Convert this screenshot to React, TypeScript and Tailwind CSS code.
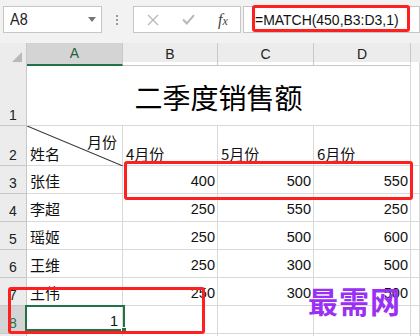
import React from 'react';

const rows = [
  { n: 3, name: '张佳', v: [400, 500, 550] },
  { n: 4, name: '李超', v: [250, 550, 250] },
  { n: 5, name: '瑶姬', v: [250, 500, 600] },
  { n: 6, name: '王维', v: [250, 300, 500] },
  { n: 7, name: '王伟', v: [250, 300, 500] },
];

const cjk = "font-['Noto_Sans_CJK_SC',sans-serif]";
const num = "font-['Liberation_Sans',Arial,sans-serif]";

function RowHead({ n, sel }: { n?: number; sel?: boolean }) {
  return (
    <div
      className={`${num} flex items-end justify-center pb-[3px] text-[14px] leading-none border-r border-b border-[#c8c8c8] ${
        sel ? 'bg-[#d4d4d4] text-[#217346]' : 'bg-[#ececec] text-[#222]'
      }`}
    >
      {n}
    </div>
  );
}

function Cell({ children, right, cls = '' }: { children?: React.ReactNode; right?: boolean; cls?: string }) {
  return (
    <div
      className={`flex items-end border-r border-b border-[#d9d9d9] bg-white text-[#111] ${
        right ? 'justify-end pr-[2px]' : 'justify-start pl-[3px]'
      } ${cls}`}
    >
      {children}
    </div>
  );
}

export default function App() {
  return (
    <div className="relative w-[420px] h-[336px] overflow-hidden bg-white">
      {/* Formula bar */}
      <div className="h-[43px] bg-[#f2f2f2] flex items-start pt-[6px] pl-[3px]">
        <div className="w-[101px] h-[27px] bg-white border border-[#c6c6c6] flex items-center justify-between pl-[6px] pr-[5px]">
          <span className={`${num} inline-block origin-left scale-x-[0.85] text-[17px] leading-none text-[#222]`}>A8</span>
          <svg width="8" height="5" viewBox="0 0 8 5">
            <polygon points="0,0 8,0 4,5" fill="#777" />
          </svg>
        </div>
        <div className="w-[31px] h-[27px] flex flex-col items-center justify-center gap-[2px]">
          <div className="w-[2px] h-[2px] bg-[#9a9a9a]" />
          <div className="w-[2px] h-[2px] bg-[#9a9a9a]" />
          <div className="w-[2px] h-[2px] bg-[#9a9a9a]" />
        </div>
        <div className="w-[111px] h-[27px] bg-white border border-[#c6c6c6] flex items-center">
          <div className="w-[38px] flex justify-center">
            <svg width="12" height="12" viewBox="0 0 12 12">
              <path d="M1 1 L11 11 M11 1 L1 11" stroke="#b8b8b8" strokeWidth="1.3" fill="none" />
            </svg>
          </div>
          <div className="w-[34px] flex justify-center">
            <svg width="13" height="11" viewBox="0 0 13 11">
              <path d="M1 5.5 L4.8 9.5 L12 1.2" stroke="#b8b8b8" strokeWidth="2" fill="none" />
            </svg>
          </div>
          <div className="flex-1 flex justify-center items-baseline font-['Liberation_Serif',serif] italic text-[#444]">
            <span className="text-[16px] leading-none">f</span>
            <span className="text-[12px] leading-none">x</span>
          </div>
        </div>
        <div className="ml-[2px] w-[180px] h-[27px] bg-white border border-[#c6c6c6] flex items-center pl-[11px]">
          <span className={`${num} inline-block origin-left scale-x-[0.9] whitespace-nowrap text-[15.5px] leading-none text-[#111]`}>
            =MATCH(450,B3:D3,1)
          </span>
        </div>
      </div>

      {/* Column header */}
      <div className={`${num} h-[19px] grid grid-cols-[27px_96px_95px_96px_97px_1fr] bg-[#ececec] text-[14px] text-[#222]`}>
        <div className="flex items-end justify-end pr-[4px] pb-[3px] border-r border-b border-[#c8c8c8]">
          <svg width="10" height="10" viewBox="0 0 10 10">
            <polygon points="10,0 10,10 0,10" fill="#b9b9b9" />
          </svg>
        </div>
        <div className="flex items-center justify-center bg-[#d4d4d4] border-r border-[#c8c8c8] border-b-2 border-b-[#217346] text-[#1d5f3a]">A</div>
        <div className="flex items-center justify-center border-r border-b border-[#c8c8c8]">B</div>
        <div className="flex items-center justify-center border-r border-b border-[#c8c8c8]">C</div>
        <div className="flex items-center justify-center border-r border-b border-[#c8c8c8]">D</div>
        <div className="border-b border-[#c8c8c8]" />
      </div>

      {/* Sheet grid */}
      <div className="grid grid-cols-[27px_96px_95px_96px_97px_1fr] grid-rows-[64px_40px_28px_28px_28px_28px_28px_28px_28px]">
        {/* Row 1 */}
        <RowHead n={1} />
        <div className={`${cjk} col-span-4 flex items-center justify-center pt-[6px] border-r border-b border-[#d9d9d9] text-[28px] leading-none text-black`}>
          二季度销售额
        </div>
        <Cell />

        {/* Row 2 */}
        <RowHead n={2} />
        <div className={`${cjk} relative border-r border-b border-[#d9d9d9] text-[15px] leading-none text-[#111]`}>
          <svg className="absolute inset-0" width="96" height="40" viewBox="0 0 96 40" preserveAspectRatio="none">
            <line x1="0" y1="0" x2="96" y2="40" stroke="#333" strokeWidth="1.1" />
          </svg>
          <div className="absolute right-[5px] top-[8px]">月份</div>
          <div className="absolute left-[3px] bottom-[4px]">姓名</div>
        </div>
        <Cell cls={`${cjk} text-[15px] leading-none pb-[4px]`}>4月份</Cell>
        <Cell cls={`${cjk} text-[15px] leading-none pb-[4px]`}>5月份</Cell>
        <Cell cls={`${cjk} text-[15px] leading-none pb-[4px]`}>6月份</Cell>
        <Cell />

        {rows.map((r) => (
          <React.Fragment key={r.n}>
            <RowHead n={r.n} />
            <Cell cls={`${cjk} text-[15px] leading-none pb-[5px]`}>{r.name}</Cell>
            {r.v.map((v, i) => (
              <Cell key={i} right cls={`${num} text-[14.5px] leading-none pb-[5px]`}>
                {v}
              </Cell>
            ))}
            <Cell />
          </React.Fragment>
        ))}

        {/* Row 8 */}
        <RowHead n={8} sel />
        <Cell right cls={`${num} text-[14.5px] leading-none pb-[5px] pr-[4px]`}>1</Cell>
        <Cell />
        <Cell />
        <Cell />
        <Cell />

        {/* Row 9 (only its top edge shows) */}
        <RowHead />
        <Cell />
        <Cell />
        <Cell />
        <Cell />
        <Cell />
      </div>

      {/* Overlays: annotations and selection */}
      <div className="absolute left-[252px] top-[5px] w-[158px] h-[27px] border-[3px] border-[#ff1f1f] rounded-[3px]" />
      <div className="absolute left-[124px] top-[161px] w-[289px] h-[39px] border-[3px] border-[#ff1f1f] rounded-[3px]" />
      <div className="absolute left-[25px] top-[305px] w-[100px] h-[26px] border-2 border-[#217346]" />
      <div className="absolute left-[121px] top-[327px] w-[6px] h-[6px] bg-[#217346] border border-white" />
      <div className="absolute left-[8px] top-[287px] w-[197px] h-[47px] border-[3px] border-[#ff1f1f] rounded-[3px]" />
      <div className={`absolute left-[308px] top-[285px] ${cjk} font-bold text-[30px] leading-none text-[#9b30f5] tracking-[1px]`}>
        最需网
      </div>
    </div>
  );
}
